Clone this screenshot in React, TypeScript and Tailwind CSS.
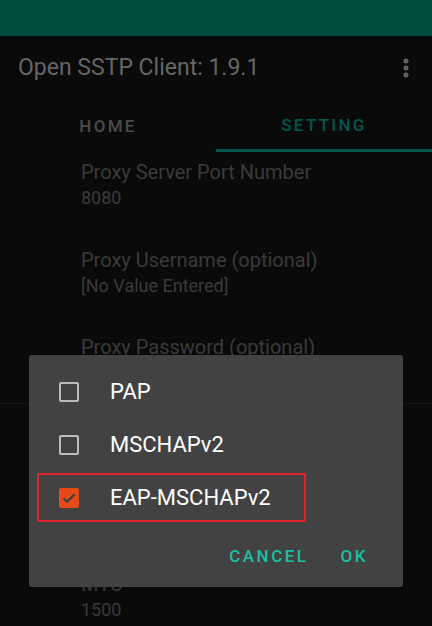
import { MoreVertical } from "lucide-react";

type Pref = { title: string; value: string; h: string };

const proxyPrefs: Pref[] = [
  { title: "Proxy Server Port Number", value: "8080", h: "h-[88px]" },
  { title: "Proxy Username (optional)", value: "[No Value Entered]", h: "h-[87px]" },
  { title: "Proxy Password (optional)", value: "[No Value Entered]", h: "h-[76px]" },
];

const protocols = [
  { name: "PAP", checked: false },
  { name: "MSCHAPv2", checked: false },
  { name: "EAP-MSCHAPv2", checked: true },
];

function PrefItem({ title, value, h }: Pref) {
  return (
    <div className={`${h} pl-[81px] pt-[7px]`}>
      <div className="text-[20px] leading-[26px] text-[#3a3a3a]">{title}</div>
      <div className="text-[18px] leading-[26px] text-[#3a3a3a]">{value}</div>
    </div>
  );
}

function CheckBox({ checked }: { checked: boolean }) {
  if (checked) {
    return (
      <div className="w-[20px] h-[20px] rounded-[2px] bg-[#e64a19] flex items-center justify-center">
        <svg viewBox="0 0 20 20" className="w-[20px] h-[20px]">
          <path d="M4.5 10.2l3.6 3.6 7.4-7.4" fill="none" stroke="#424242" strokeWidth="2.2" />
        </svg>
      </div>
    );
  }
  return <div className="w-[20px] h-[20px] rounded-[2px] border-2 border-[#bdbdbd]" />;
}

export default function App() {
  return (
    <div className="relative w-[432px] h-[626px] overflow-hidden bg-[#0a0a0a] font-['Roboto',sans-serif]">
      <div className="h-[36px] bg-[#014c40]" />

      <div className="h-[64px] flex items-center justify-between pl-[18px] pr-[14px]">
        <span className="text-[23px] text-[#666666]">Open SSTP Client: 1.9.1</span>
        <MoreVertical className="w-[24px] h-[24px] text-[#666666]" strokeWidth={3} />
      </div>

      <div className="h-[52px] grid grid-cols-2">
        <div className="flex items-center justify-center pt-[2px] text-[17px] font-medium tracking-[2.3px] text-[#4a4a4a]">
          HOME
        </div>
        <div className="flex items-center justify-center pt-[2px] border-b-[3px] border-[#00574b] text-[17px] font-medium tracking-[2.3px] text-[#00574b]">
          SETTING
        </div>
      </div>

      <div>
        {proxyPrefs.map((p) => (
          <PrefItem key={p.title} {...p} />
        ))}
        <div className="h-px bg-[#151515]" />
        <div className="h-[72px] pl-[81px] pt-[28px] text-[15px] font-medium text-[#00574b]">PPP Setting</div>
        <PrefItem title="MRU" value="1500" h="h-[88px]" />
        <PrefItem title="MTU" value="1500" h="h-[88px]" />
      </div>

      <div className="absolute left-[29px] top-[355px] w-[374px] h-[232px] rounded-[3px] bg-[#424242] pt-[10px] flex flex-col">
        {protocols.map((p) => (
          <div key={p.name} className="relative h-[53px] flex items-center pl-[30px]">
            <CheckBox checked={p.checked} />
            <span className="ml-[31px] text-[22px] text-white">{p.name}</span>
            {p.checked && (
              <div className="absolute left-[8px] top-[2px] w-[269px] h-[49px] border-2 border-[#e3232b] rounded-[1px]" />
            )}
          </div>
        ))}
        <div className="flex-1 flex items-center justify-end gap-[32px] pr-[35px] pt-[2px] text-[17px] font-medium tracking-[2.5px] text-[#19c0a6]">
          <span>CANCEL</span>
          <span>OK</span>
        </div>
      </div>
    </div>
  );
}
